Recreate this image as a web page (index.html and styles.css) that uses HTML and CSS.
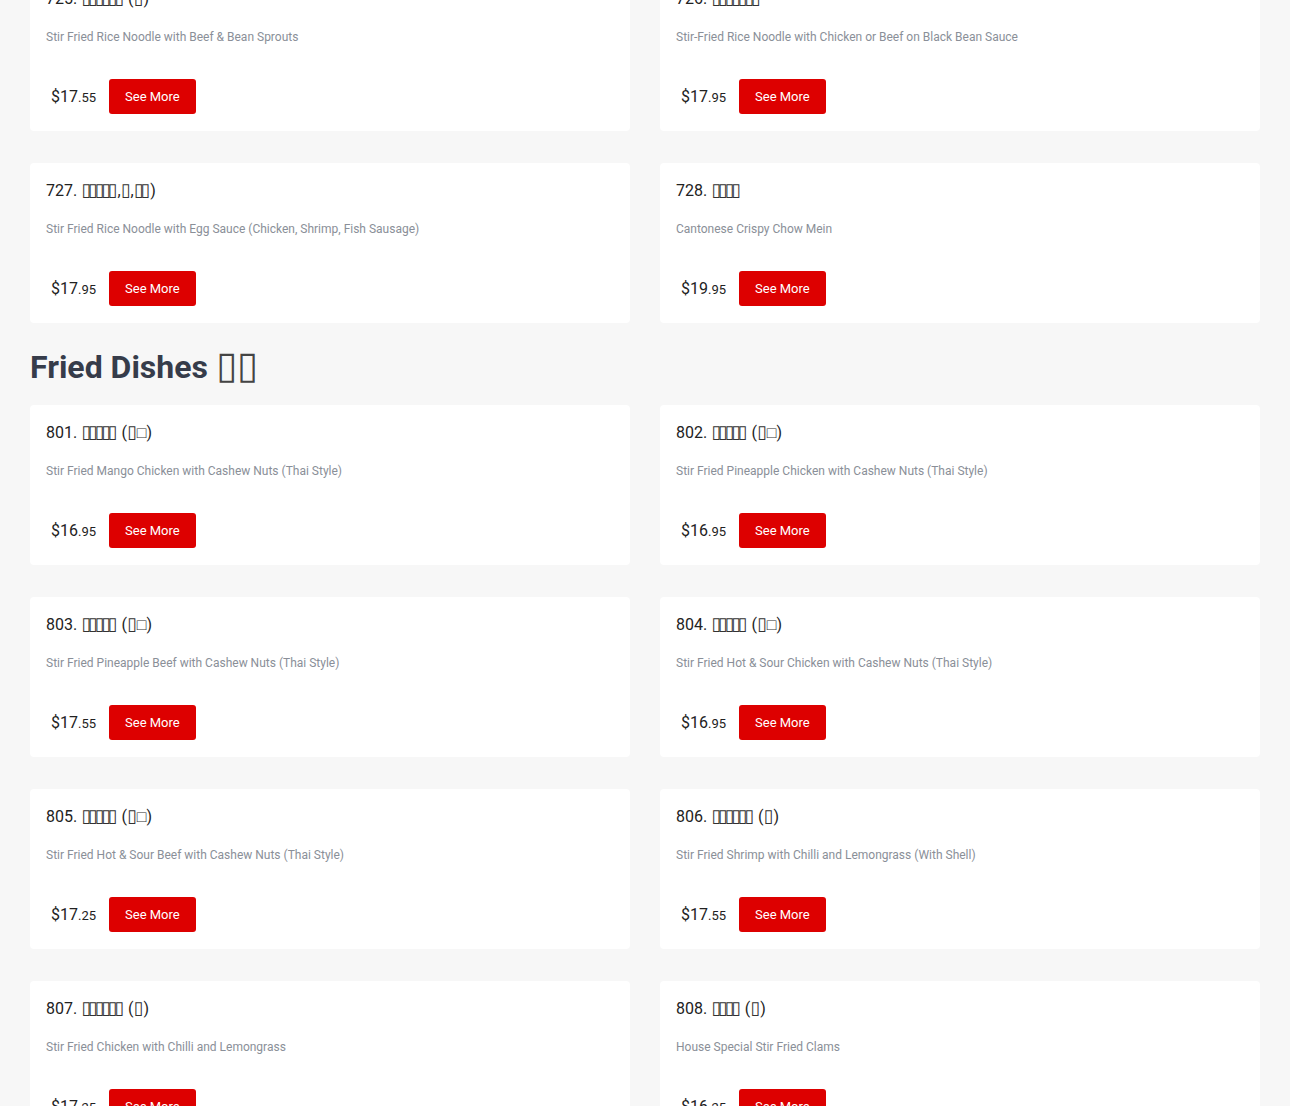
FILE: index.html
```html
<!DOCTYPE html>
<html lang="zh-Hant">
<head>
<meta charset="utf-8">
<title>Menu</title>
<link rel="stylesheet" href="styles.css">
</head>
<body>
<main class="menu">
  <section class="category category-scrolled">
    <div class="grid">
      <article class="card">
        <h3 class="name">725. <span class="zh">▯▯▯▯▯▯</span> (<span class="zh">▯</span>)</h3>
        <p class="desc">Stir Fried Rice Noodle with Beef &amp; Bean Sprouts</p>
        <div class="buy"><span class="price">$17<small>.55</small></span><button class="more">See More</button></div>
      </article>
      <article class="card">
        <h3 class="name">726. <span class="zh">▯▯▯▯▯▯▯</span></h3>
        <p class="desc">Stir-Fried Rice Noodle with Chicken or Beef on Black Bean Sauce</p>
        <div class="buy"><span class="price">$17<small>.95</small></span><button class="more">See More</button></div>
      </article>
      <article class="card">
        <h3 class="name">727. <span class="zh">▯▯▯▯▯</span>,<span class="zh">▯</span>,<span class="zh">▯▯</span>)</h3>
        <p class="desc">Stir Fried Rice Noodle with Egg Sauce (Chicken, Shrimp, Fish Sausage)</p>
        <div class="buy"><span class="price">$17<small>.95</small></span><button class="more">See More</button></div>
      </article>
      <article class="card">
        <h3 class="name">728. <span class="zh">▯▯▯▯</span></h3>
        <p class="desc">Cantonese Crispy Chow Mein</p>
        <div class="buy"><span class="price">$19<small>.95</small></span><button class="more">See More</button></div>
      </article>
    </div>
  </section>

  <section class="category">
    <h2 class="cat-title">Fried Dishes <span class="zh-h">▯▯</span></h2>
    <div class="grid">
      <article class="card">
        <h3 class="name">801. <span class="zh">▯▯▯▯▯</span> (<span class="zh">▯</span><span class="sq">□</span>)</h3>
        <p class="desc">Stir Fried Mango Chicken with Cashew Nuts (Thai Style)</p>
        <div class="buy"><span class="price">$16<small>.95</small></span><button class="more">See More</button></div>
      </article>
      <article class="card">
        <h3 class="name">802. <span class="zh">▯▯▯▯▯</span> (<span class="zh">▯</span><span class="sq">□</span>)</h3>
        <p class="desc">Stir Fried Pineapple Chicken with Cashew Nuts (Thai Style)</p>
        <div class="buy"><span class="price">$16<small>.95</small></span><button class="more">See More</button></div>
      </article>
      <article class="card">
        <h3 class="name">803. <span class="zh">▯▯▯▯▯</span> (<span class="zh">▯</span><span class="sq">□</span>)</h3>
        <p class="desc">Stir Fried Pineapple Beef with Cashew Nuts (Thai Style)</p>
        <div class="buy"><span class="price">$17<small>.55</small></span><button class="more">See More</button></div>
      </article>
      <article class="card">
        <h3 class="name">804. <span class="zh">▯▯▯▯▯</span> (<span class="zh">▯</span><span class="sq">□</span>)</h3>
        <p class="desc">Stir Fried Hot &amp; Sour Chicken with Cashew Nuts (Thai Style)</p>
        <div class="buy"><span class="price">$16<small>.95</small></span><button class="more">See More</button></div>
      </article>
      <article class="card">
        <h3 class="name">805. <span class="zh">▯▯▯▯▯</span> (<span class="zh">▯</span><span class="sq">□</span>)</h3>
        <p class="desc">Stir Fried Hot &amp; Sour Beef with Cashew Nuts (Thai Style)</p>
        <div class="buy"><span class="price">$17<small>.25</small></span><button class="more">See More</button></div>
      </article>
      <article class="card">
        <h3 class="name">806. <span class="zh">▯▯▯▯▯▯</span> (<span class="zh">▯</span>)</h3>
        <p class="desc">Stir Fried Shrimp with Chilli and Lemongrass (With Shell)</p>
        <div class="buy"><span class="price">$17<small>.55</small></span><button class="more">See More</button></div>
      </article>
      <article class="card">
        <h3 class="name">807. <span class="zh">▯▯▯▯▯▯</span> (<span class="zh">▯</span>)</h3>
        <p class="desc">Stir Fried Chicken with Chilli and Lemongrass</p>
        <div class="buy"><span class="price">$17<small>.25</small></span><button class="more">See More</button></div>
      </article>
      <article class="card">
        <h3 class="name">808. <span class="zh">▯▯▯▯</span> (<span class="zh">▯</span>)</h3>
        <p class="desc">House Special Stir Fried Clams</p>
        <div class="buy"><span class="price">$16<small>.25</small></span><button class="more">See More</button></div>
      </article>
    </div>
  </section>
</main>
</body>
</html>
```

FILE: styles.css
```css
html, body {
  margin: 0;
  padding: 0;
}

body {
  background: #f7f7f7;
  font-family: Roboto, "Noto Sans", sans-serif;
  color: #222;
  overflow: hidden;
}

.menu {
  padding: 0 30px;
}

.category-scrolled {
  margin-top: -29px;
}

.grid {
  display: grid;
  grid-template-columns: 600px 600px;
  column-gap: 30px;
  row-gap: 32px;
}

.cat-title {
  margin: 26px 0 20px;
  font-family: Roboto, sans-serif;
  font-size: 32px;
  line-height: 36px;
  height: 36px;
  font-weight: 700;
  color: #363c4a;
}

.card {
  box-sizing: border-box;
  height: 160px;
  background: #fff;
  border-radius: 4px;
  padding: 17px 16px 17px;
  display: flex;
  flex-direction: column;
}

.name {
  margin: 0;
  height: 22px;
  font-size: 16px;
  line-height: 22px;
  font-weight: 400;
  color: #222;
}

.zh {
  font-family: "DejaVu Sans", sans-serif;
  font-size: 18px;
  line-height: 0;
  letter-spacing: -3.3px;
  padding-right: 3.3px;
  color: #333;
}

.sq {
  font-family: "Liberation Sans", sans-serif;
  line-height: 0;
  color: #333;
}

.zh-h {
  font-family: "DejaVu Sans", sans-serif;
  font-weight: 400;
  font-size: 38px;
  line-height: 0;
  color: #444;
}

.desc {
  margin: 18px 0 0;
  font-size: 12px;
  line-height: 18px;
  color: #8a8f98;
}

.buy {
  margin-top: auto;
  display: flex;
  align-items: center;
  gap: 13px;
}

.price {
  margin-left: 5px;
  font-size: 16px;
  color: #222;
}

.price small {
  font-size: 13px;
}

.more {
  height: 35px;
  padding: 0 16px;
  border: none;
  border-radius: 3px;
  background: #dd0000;
  color: #fff;
  font-family: Roboto, sans-serif;
  font-size: 13px;
  cursor: pointer;
}
```
